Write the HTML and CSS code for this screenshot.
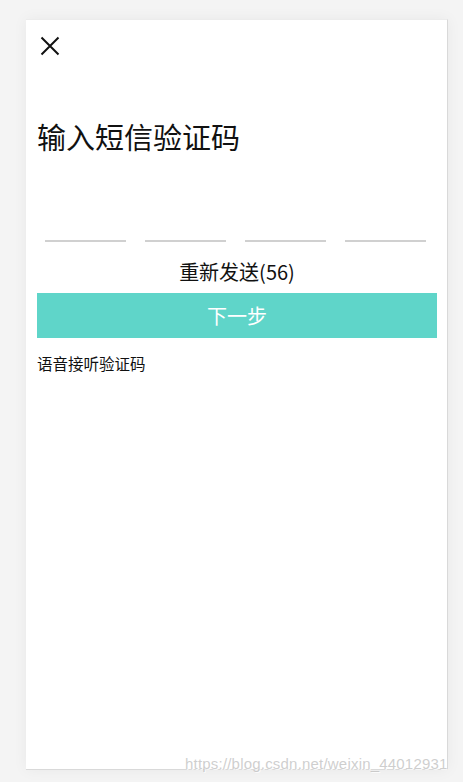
FILE: index.html
```html
<!DOCTYPE html>
<html lang="zh-CN">
<head>
    <meta charset="UTF-8">
    <meta name="viewport" content="width=device-width, initial-scale=1.0">
    <title>输入短信验证码</title>
    <link rel="stylesheet" href="styles.css">
</head>
<body>
<div class="phone">
    <div class="header">
        <svg class="close" width="20" height="20" viewBox="0 0 20 20">
            <path d="M1.5 1.5 L18.5 18.5 M18.5 1.5 L1.5 18.5" stroke="#111" stroke-width="2" fill="none"/>
        </svg>
    </div>
    <h1 class="title">输入短信验证码</h1>
    <div class="code-row">
        <div class="code-cell"></div>
        <div class="code-cell"></div>
        <div class="code-cell"></div>
        <div class="code-cell"></div>
    </div>
    <div class="resend">重新发送(56)</div>
    <button class="next">下一步</button>
    <div class="voice">语音接听验证码</div>
</div>
<div class="watermark">https://blog.csdn.net/weixin_44012931</div>
</body>
</html>
```
FILE: styles.css
```css
body {
    margin: 0;
    background-color: #f4f4f4;
    font-family: "Noto Sans CJK SC", "Noto Sans", sans-serif;
    color: #111;
    position: relative;
    height: 782px;
    overflow: hidden;
}

.phone {
    box-sizing: border-box;
    width: 422px;
    height: 751px;
    margin: 19px 0 0 26px;
    padding: 0 10px 0 11px;
    background-color: #fff;
    border-top: 1px solid #ececec;
    border-right: 1px solid #d9d9d9;
    border-bottom: 1px solid #d9d9d9;
    box-shadow: 0 0 14px rgba(0, 0, 0, 0.05);
}

.header {
    padding-top: 16px;
    height: 20px;
}

.close {
    display: block;
    margin-left: 3px;
}

.title {
    margin: 60px 0 0;
    font-size: 29px;
    font-weight: normal;
    line-height: 40px;
}

.code-row {
    display: flex;
    gap: 19px;
    margin: 44px 0 0 8px;
}

.code-cell {
    width: 81px;
    height: 40px;
    border-bottom: 2px solid #d0d0d0;
}

.resend {
    margin-top: 15px;
    text-align: center;
    font-size: 20px;
    line-height: 30px;
}

.next {
    display: block;
    width: 100%;
    height: 45px;
    margin-top: 6px;
    border: none;
    background-color: #5fd5c9;
    color: #fff;
    font-family: inherit;
    font-size: 20px;
    cursor: pointer;
}

.voice {
    margin-top: 13px;
    font-size: 15.5px;
    line-height: 24px;
}

.watermark {
    position: absolute;
    left: 185px;
    top: 755px;
    font-family: "Liberation Sans", Arial, sans-serif;
    font-size: 15px;
    letter-spacing: 0.2px;
    color: rgba(190, 190, 190, 0.75);
    text-shadow: 1px 1px 0 rgba(255, 255, 255, 0.8);
}
```
